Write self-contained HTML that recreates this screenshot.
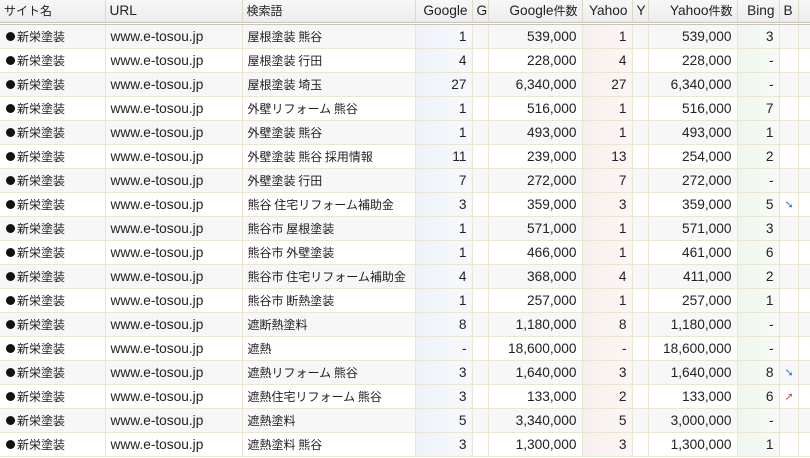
<!DOCTYPE html>
<html><head><meta charset="utf-8"><style>
body{margin:0;width:810px;height:458px;overflow:hidden;background:#fff;font-family:"Liberation Sans","Noto Sans CJK JP",sans-serif;font-size:13.7px;color:#222}
table{border-collapse:collapse;table-layout:fixed;width:810px}
th{height:22px;line-height:16px;font-weight:normal;background:linear-gradient(#f7f7f7,#ececec);border-right:1px solid #ddd8c8;border-bottom:3px double #c8c4b8;padding:0 4px;text-align:left;white-space:nowrap;overflow:hidden}
th.r{text-align:right}
td{height:23px;line-height:16px;border-right:1px solid #ebe5d3;border-bottom:1px solid #ebe5d3;padding:0 5px;white-space:nowrap;overflow:hidden}
tr:nth-child(even) td{background:#f7f7f7}
td.r{text-align:right}
td.g{background:linear-gradient(90deg,#eef2f8,#f7f9fc)!important}
td.y{background:linear-gradient(90deg,#f8efec,#fbf7f5)!important}
td.b{background:linear-gradient(90deg,#eff6ee,#f7fbf6)!important}
td.s{padding-left:6px}
td.k,th.k,.j{font-family:"Noto Sans CJK JP",sans-serif;font-size:12px}
.dot{display:inline-block;width:9px;height:9px;border-radius:50%;background:#111;margin-right:2px;vertical-align:0}
.dn{color:#3a7be0;font-size:11px}
.up{color:#e0503a;font-size:11px}
</style></head><body>
<table>
<colgroup><col style="width:105px"><col style="width:137px"><col style="width:173px"><col style="width:57px"><col style="width:16px"><col style="width:94px"><col style="width:50px"><col style="width:16px"><col style="width:89px"><col style="width:42px"><col style="width:19px"><col style="width:12px"></colgroup>
<tr><th class="k">サイト名</th><th>URL</th><th class="k">検索語</th><th class="r">Google</th><th>G</th><th class="r">Google<span class="j">件数</span></th><th class="r">Yahoo</th><th>Y</th><th class="r">Yahoo<span class="j">件数</span></th><th class="r">Bing</th><th>B</th><th></th></tr>
<tr><td class="s k"><span class="dot"></span>新栄塗装</td><td>www.e-tosou.jp</td><td class="k">屋根塗装 熊谷</td><td class="r g">1</td><td></td><td class="r">539,000</td><td class="r y">1</td><td></td><td class="r">539,000</td><td class="r b">3</td><td></td><td></td></tr>
<tr><td class="s k"><span class="dot"></span>新栄塗装</td><td>www.e-tosou.jp</td><td class="k">屋根塗装 行田</td><td class="r g">4</td><td></td><td class="r">228,000</td><td class="r y">4</td><td></td><td class="r">228,000</td><td class="r b">-</td><td></td><td></td></tr>
<tr><td class="s k"><span class="dot"></span>新栄塗装</td><td>www.e-tosou.jp</td><td class="k">屋根塗装 埼玉</td><td class="r g">27</td><td></td><td class="r">6,340,000</td><td class="r y">27</td><td></td><td class="r">6,340,000</td><td class="r b">-</td><td></td><td></td></tr>
<tr><td class="s k"><span class="dot"></span>新栄塗装</td><td>www.e-tosou.jp</td><td class="k">外壁リフォーム 熊谷</td><td class="r g">1</td><td></td><td class="r">516,000</td><td class="r y">1</td><td></td><td class="r">516,000</td><td class="r b">7</td><td></td><td></td></tr>
<tr><td class="s k"><span class="dot"></span>新栄塗装</td><td>www.e-tosou.jp</td><td class="k">外壁塗装 熊谷</td><td class="r g">1</td><td></td><td class="r">493,000</td><td class="r y">1</td><td></td><td class="r">493,000</td><td class="r b">1</td><td></td><td></td></tr>
<tr><td class="s k"><span class="dot"></span>新栄塗装</td><td>www.e-tosou.jp</td><td class="k">外壁塗装 熊谷 採用情報</td><td class="r g">11</td><td></td><td class="r">239,000</td><td class="r y">13</td><td></td><td class="r">254,000</td><td class="r b">2</td><td></td><td></td></tr>
<tr><td class="s k"><span class="dot"></span>新栄塗装</td><td>www.e-tosou.jp</td><td class="k">外壁塗装 行田</td><td class="r g">7</td><td></td><td class="r">272,000</td><td class="r y">7</td><td></td><td class="r">272,000</td><td class="r b">-</td><td></td><td></td></tr>
<tr><td class="s k"><span class="dot"></span>新栄塗装</td><td>www.e-tosou.jp</td><td class="k">熊谷 住宅リフォーム補助金</td><td class="r g">3</td><td></td><td class="r">359,000</td><td class="r y">3</td><td></td><td class="r">359,000</td><td class="r b">5</td><td><span class="dn">➘</span></td><td></td></tr>
<tr><td class="s k"><span class="dot"></span>新栄塗装</td><td>www.e-tosou.jp</td><td class="k">熊谷市 屋根塗装</td><td class="r g">1</td><td></td><td class="r">571,000</td><td class="r y">1</td><td></td><td class="r">571,000</td><td class="r b">3</td><td></td><td></td></tr>
<tr><td class="s k"><span class="dot"></span>新栄塗装</td><td>www.e-tosou.jp</td><td class="k">熊谷市 外壁塗装</td><td class="r g">1</td><td></td><td class="r">466,000</td><td class="r y">1</td><td></td><td class="r">461,000</td><td class="r b">6</td><td></td><td></td></tr>
<tr><td class="s k"><span class="dot"></span>新栄塗装</td><td>www.e-tosou.jp</td><td class="k">熊谷市 住宅リフォーム補助金</td><td class="r g">4</td><td></td><td class="r">368,000</td><td class="r y">4</td><td></td><td class="r">411,000</td><td class="r b">2</td><td></td><td></td></tr>
<tr><td class="s k"><span class="dot"></span>新栄塗装</td><td>www.e-tosou.jp</td><td class="k">熊谷市 断熱塗装</td><td class="r g">1</td><td></td><td class="r">257,000</td><td class="r y">1</td><td></td><td class="r">257,000</td><td class="r b">1</td><td></td><td></td></tr>
<tr><td class="s k"><span class="dot"></span>新栄塗装</td><td>www.e-tosou.jp</td><td class="k">遮断熱塗料</td><td class="r g">8</td><td></td><td class="r">1,180,000</td><td class="r y">8</td><td></td><td class="r">1,180,000</td><td class="r b">-</td><td></td><td></td></tr>
<tr><td class="s k"><span class="dot"></span>新栄塗装</td><td>www.e-tosou.jp</td><td class="k">遮熱</td><td class="r g">-</td><td></td><td class="r">18,600,000</td><td class="r y">-</td><td></td><td class="r">18,600,000</td><td class="r b">-</td><td></td><td></td></tr>
<tr><td class="s k"><span class="dot"></span>新栄塗装</td><td>www.e-tosou.jp</td><td class="k">遮熱リフォーム 熊谷</td><td class="r g">3</td><td></td><td class="r">1,640,000</td><td class="r y">3</td><td></td><td class="r">1,640,000</td><td class="r b">8</td><td><span class="dn">➘</span></td><td></td></tr>
<tr><td class="s k"><span class="dot"></span>新栄塗装</td><td>www.e-tosou.jp</td><td class="k">遮熱住宅リフォーム 熊谷</td><td class="r g">3</td><td></td><td class="r">133,000</td><td class="r y">2</td><td></td><td class="r">133,000</td><td class="r b">6</td><td><span class="up">➚</span></td><td></td></tr>
<tr><td class="s k"><span class="dot"></span>新栄塗装</td><td>www.e-tosou.jp</td><td class="k">遮熱塗料</td><td class="r g">5</td><td></td><td class="r">3,340,000</td><td class="r y">5</td><td></td><td class="r">3,000,000</td><td class="r b">-</td><td></td><td></td></tr>
<tr><td class="s k"><span class="dot"></span>新栄塗装</td><td>www.e-tosou.jp</td><td class="k">遮熱塗料 熊谷</td><td class="r g">3</td><td></td><td class="r">1,300,000</td><td class="r y">3</td><td></td><td class="r">1,300,000</td><td class="r b">1</td><td></td><td></td></tr>
</table>
</body></html>
